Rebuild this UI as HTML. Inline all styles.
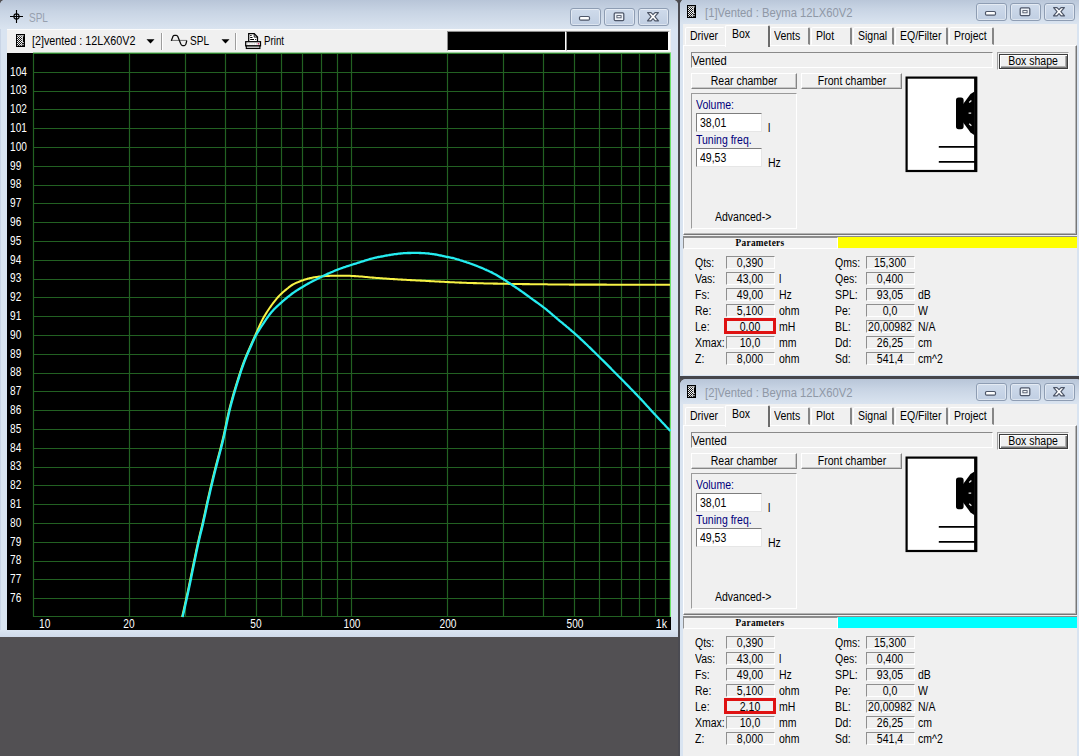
<!DOCTYPE html>
<html><head><meta charset="utf-8"><title>WinISD</title>
<style>
html,body{margin:0;padding:0}
body{width:1079px;height:756px;overflow:hidden;position:relative;background:#525053;font-family:"Liberation Sans",sans-serif;font-size:12px;color:#000}
body div,body span.t,body svg{position:absolute;box-sizing:border-box}
span.t{white-space:pre;display:block}
.frame{background:#d9e4f1}
.title{background:linear-gradient(#b8c5d8 0%,#c8d4e4 40%,#dae4f0 100%)}
.cb{border:1px solid #8e9db3;border-radius:3px;background:linear-gradient(#cfdbeb,#c0cee2);box-shadow:inset 0 0 0 1px rgba(255,255,255,.45)}
.face{background:#f0f0f0}
.sunk{border:1px solid;border-color:#8a8a8a #fff #fff #8a8a8a;background:#f0f0f0}
.sunkw{border:1px solid;border-color:#7d7d7d #e6e6e6 #e6e6e6 #7d7d7d;background:#fff}
.btn{border:1px solid;border-color:#fff #858585 #858585 #fff;background:#f0f0f0;box-shadow:inset -1px -1px 0 #c8c8c8}
.tab{border:1px solid;border-color:#fff #868686 transparent #fff;border-right-width:2px;border-radius:2px 2px 0 0;background:#f0f0f0}
</style></head>
<body>
<div class="frame" style="left:0px;top:0px;width:678px;height:637px;border-left:1px solid #c9d5e6;border-radius:5px 5px 0 0;"></div>
<div class="title" style="left:0px;top:0px;width:678px;height:29px;border-radius:5px 5px 0 0;"></div>
<div style="left:0px;top:630px;width:678px;height:7px;background:linear-gradient(#dbe5f2,#cfdaea)"></div>
<svg style="left:9px;top:9px" width="15" height="15" viewBox="0 0 15 15"><path d="M7.5,1V14M1,7.5H14" stroke="#000" stroke-width="1.1"/><circle cx="7.5" cy="7.5" r="2.6" fill="none" stroke="#000" stroke-width="1.1"/></svg>
<span class="t" style="left:29.3px;top:10.72px;font-size:12.5px;line-height:14.5px;color:#97a0ae;transform:scaleX(0.8);transform-origin:0 50%;">SPL</span>
<div class="cb" style="left:569.5px;top:8px;width:31px;height:17.5px;"></div>
<svg style="left:578.0px;top:11.75px" width="14" height="10" viewBox="0 0 14 10"><rect x="1.5" y="4.5" width="10" height="3.6" rx="1.2" fill="#fff" stroke="#4d5668" stroke-width="1.2"/></svg>
<div class="cb" style="left:603.5px;top:8px;width:31px;height:17.5px;"></div>
<svg style="left:612.0px;top:10.75px" width="14" height="12" viewBox="0 0 14 12"><rect x="2.2" y="1.8" width="9.6" height="7.8" rx="1.2" fill="#eef2f8" stroke="#4d5668" stroke-width="1.25"/><rect x="4.9" y="4.6" width="4.2" height="2.2" fill="#fff" stroke="#4d5668" stroke-width="0.9"/></svg>
<div class="cb" style="left:637.5px;top:8px;width:31px;height:17.5px;"></div>
<svg style="left:646.0px;top:10.75px" width="14" height="12" viewBox="0 0 14 12"><path d="M1.6,1.6 L5,1.6 L7,3.7 L9,1.6 L12.4,1.6 L8.9,5.6 L12.5,9.8 L9,9.8 L7,7.6 L5,9.8 L1.5,9.8 L5.1,5.6 Z" fill="#fff" stroke="#4d5668" stroke-width="1.2" stroke-linejoin="round"/></svg>
<div style="left:7px;top:29px;width:664px;height:24px;background:#f0f0f0;border-top:1px solid #fbfbfb"></div>
<svg style="left:16px;top:34px" width="9" height="13" viewBox="0 0 9 13"><defs><pattern id="hk0" width="2" height="2" patternUnits="userSpaceOnUse"><rect width="2" height="2" fill="#111"/><rect width="1" height="1" fill="#f4f4f4"/><rect x="1" y="1" width="1" height="1" fill="#f4f4f4"/></pattern></defs><rect width="9" height="13" fill="#000"/><rect x="1" y="1.4" width="5" height="10.4" fill="url(#hk0)"/><path d="M1,1.8H8" stroke="#e9e9e9" stroke-width="0.8"/><path d="M6.4,1.5V8.6" stroke="#fff" stroke-width="0.9"/><path d="M6,8.6H8M4.2,10.7H8" stroke="#ededed" stroke-width="0.8"/></svg>
<span class="t" style="left:31.6px;top:34.14px;font-size:12px;line-height:14px;transform:scaleX(0.896);transform-origin:0 50%;">[2]vented : 12LX60V2</span>
<svg style="left:146px;top:39px" width="9" height="5" viewBox="0 0 9 5"><path d="M0.5,0.3H8.5L4.5,4.6Z" fill="#000"/></svg>
<div style="left:161px;top:32.5px;width:1px;height:17.5px;background:#9d9d9d"></div>
<div style="left:162px;top:32.5px;width:1px;height:17.5px;background:#fff"></div>
<svg style="left:170px;top:33px" width="19" height="14" viewBox="170 33 19 14"><path d="M171.5,40.4H186.6" stroke="#6f6f6f" stroke-width="1"/><path d="M171.3,40.9 L173,36.3 Q173.5,35.3 174.5,35.3 H176.3 Q177.3,35.3 177.8,36.5 L180.6,43.6 Q181.3,45.5 182.5,45.5 H184.3 Q185.4,45.5 185.9,44.1 L186.8,40.5" fill="none" stroke="#0a0a0a" stroke-width="1.25" stroke-linejoin="round"/></svg>
<span class="t" style="left:189.5px;top:34.14px;font-size:12px;line-height:14px;transform:scaleX(0.84);transform-origin:0 50%;">SPL</span>
<svg style="left:220.5px;top:39px" width="9" height="5" viewBox="0 0 9 5"><path d="M0.5,0.3H8.5L4.5,4.6Z" fill="#000"/></svg>
<div style="left:235px;top:32.5px;width:1px;height:17.5px;background:#9d9d9d"></div>
<div style="left:236px;top:32.5px;width:1px;height:17.5px;background:#fff"></div>
<svg style="left:245px;top:32px" width="17" height="18" viewBox="245 32 17 18"><path d="M248.7,41.6V33.5H254.2L257.5,37.1V41.6" fill="#fff" stroke="#000" stroke-width="1.25"/><path d="M254.2,33.5V37.1H257.5" fill="none" stroke="#000" stroke-width="0.9"/><path d="M250.2,35.5h1.4M250.2,37.5h2.3M250.2,39.5h3.8M255.2,39.5h1" stroke="#000" stroke-width="1"/><rect x="245.7" y="41.7" width="14.8" height="4.2" fill="#fff" stroke="#000" stroke-width="1.25"/><path d="M247,43.8H257.5" stroke="#c9c9c9" stroke-width="1.2" stroke-dasharray="0.9 0.9"/><rect x="257.7" y="43" width="1.5" height="1.5" fill="#c8326e"/><rect x="246.3" y="45.9" width="13.6" height="2.6" fill="#c4c4c4" stroke="#000" stroke-width="1.1"/></svg>
<span class="t" style="left:264px;top:34.14px;font-size:12px;line-height:14px;transform:scaleX(0.81);transform-origin:0 50%;">Print</span>
<div style="left:446.5px;top:31px;width:119.5px;height:19.5px;background:#000;border:1px solid;border-color:#8e8e8e #fff #fff #8e8e8e"></div>
<div style="left:566px;top:31px;width:104.3px;height:19.5px;background:#000;border:1px solid;border-color:#8e8e8e #fff #fff #8e8e8e;border-right-width:2.3px"></div>
<svg class="plot" style="left:7px;top:53px" width="664" height="577" viewBox="7 53 664 577">
<rect x="7" y="53" width="664" height="577" fill="#000"/>
<path d="M33.5,53V617M129.5,53V617M185.5,53V617M225.5,53V617M256.5,53V617M281.5,53V617M302.5,53V617M321.5,53V617M337.5,53V617M351.5,53V617M447.5,53V617M503.5,53V617M543.5,53V617M574.5,53V617M599.5,53V617M621.5,53V617M639.5,53V617M655.5,53V617M670.5,53V617M33,616.5H671M33,598.5H671M33,579.5H671M33,561.5H671M33,542.5H671M33,523.5H671M33,504.5H671M33,485.5H671M33,467.5H671M33,448.5H671M33,429.5H671M33,410.5H671M33,391.5H671M33,373.5H671M33,354.5H671M33,335.5H671M33,316.5H671M33,297.5H671M33,279.5H671M33,260.5H671M33,241.5H671M33,222.5H671M33,203.5H671M33,185.5H671M33,166.5H671M33,147.5H671M33,128.5H671M33,109.5H671M33,91.5H671M33,72.5H671M33,53.5H671" stroke="#226122" stroke-width="1.2" fill="none"/>
<path d="M33,53.4H671" stroke="#2c7c2c" stroke-width="1.2" fill="none"/>
<path d="M670.6,53V617" stroke="#6be26b" stroke-width="1.6" fill="none"/>
<path d="M182.1,617.0 L183.1,612.7 L184.1,608.3 L185.1,603.8 L186.1,599.3 L187.1,594.7 L188.1,590.1 L189.1,585.3 L190.1,580.4 L191.1,575.5 L192.1,570.6 L193.1,565.7 L194.1,560.9 L195.1,556.1 L196.1,551.3 L197.1,546.6 L198.1,542.1 L199.1,537.8 L200.1,533.6 L201.1,529.6 L202.1,525.4 L203.1,521.1 L204.1,516.5 L205.1,511.9 L206.1,507.2 L207.1,502.6 L208.1,498.2 L209.1,493.9 L210.1,489.6 L211.1,485.4 L212.1,481.2 L213.1,477.1 L214.1,473.0 L215.1,469.0 L216.1,465.1 L217.1,461.3 L218.1,457.5 L219.1,453.7 L220.1,449.9 L221.1,446.1 L222.1,442.1 L223.1,437.9 L224.1,433.4 L225.1,428.7 L226.1,423.9 L227.1,419.2 L228.1,414.6 L229.1,410.3 L230.1,406.3 L231.1,402.5 L232.1,398.9 L233.1,395.3 L234.1,391.9 L235.1,388.5 L236.1,385.2 L237.1,382.0 L238.1,378.8 L239.1,375.6 L240.1,372.5 L241.1,369.5 L242.1,366.6 L243.1,363.8 L244.1,361.1 L245.1,358.6 L246.1,356.1 L247.1,353.8 L248.1,351.5 L249.1,349.2 L250.1,346.9 L251.1,344.6 L252.1,342.4 L253.1,340.1 L254.1,337.9 L255.1,335.6 L256.1,333.4 L257.1,331.1 L258.1,328.8 L259.1,326.6 L260.1,324.5 L261.1,322.4 L262.1,320.4 L263.1,318.4 L264.1,316.6 L265.1,315.0 L266.1,313.4 L267.1,311.8 L268.1,310.3 L269.1,308.8 L270.1,307.3 L271.1,305.9 L272.1,304.5 L273.1,303.1 L274.1,301.8 L275.1,300.6 L276.1,299.4 L277.1,298.2 L278.1,297.0 L279.1,295.9 L280.1,294.9 L281.1,293.9 L282.1,293.0 L283.1,292.1 L284.1,291.2 L285.1,290.4 L286.1,289.6 L287.1,288.8 L288.1,288.0 L289.1,287.1 L290.1,286.4 L291.1,285.6 L292.1,285.0 L293.1,284.4 L294.1,283.9 L295.1,283.4 L296.1,282.9 L297.1,282.5 L298.1,282.1 L299.1,281.7 L300.1,281.3 L301.1,280.9 L302.1,280.5 L303.1,280.2 L304.1,279.8 L305.1,279.5 L306.1,279.2 L307.1,278.9 L308.1,278.6 L309.1,278.4 L310.1,278.1 L311.1,277.9 L312.1,277.7 L313.1,277.5 L314.1,277.3 L315.1,277.2 L316.1,277.0 L317.1,276.9 L318.1,276.7 L319.1,276.6 L320.1,276.5 L321.1,276.4 L322.1,276.3 L323.1,276.2 L324.1,276.2 L325.1,276.1 L326.1,276.0 L327.1,276.0 L328.1,275.9 L329.1,275.9 L330.1,275.8 L331.1,275.8 L332.1,275.8 L333.1,275.8 L334.1,275.8 L335.1,275.8 L336.1,275.7 L337.1,275.7 L338.1,275.7 L339.1,275.7 L340.1,275.7 L341.1,275.7 L342.1,275.7 L343.1,275.7 L344.1,275.7 L345.1,275.7 L346.1,275.7 L347.1,275.7 L348.1,275.8 L349.1,275.8 L350.1,275.8 L351.1,275.9 L352.1,276.0 L353.1,276.0 L354.1,276.1 L355.1,276.1 L356.1,276.2 L357.1,276.3 L358.1,276.3 L359.1,276.4 L360.1,276.5 L361.1,276.5 L362.1,276.6 L363.1,276.7 L364.1,276.8 L365.1,276.9 L366.1,277.0 L367.1,277.1 L368.1,277.2 L369.1,277.3 L370.1,277.4 L371.1,277.5 L372.1,277.6 L373.1,277.6 L374.1,277.7 L375.1,277.8 L376.1,277.9 L377.1,277.9 L378.1,278.0 L379.1,278.1 L380.1,278.2 L381.1,278.2 L382.1,278.3 L383.1,278.4 L384.1,278.5 L385.1,278.5 L386.1,278.6 L387.1,278.7 L388.1,278.7 L389.1,278.8 L390.1,278.9 L391.1,278.9 L392.1,279.0 L393.1,279.1 L394.1,279.1 L395.1,279.2 L396.1,279.3 L397.1,279.3 L398.1,279.4 L399.1,279.4 L400.1,279.5 L401.1,279.6 L402.1,279.6 L403.1,279.7 L404.1,279.7 L405.1,279.8 L406.1,279.8 L407.1,279.9 L408.1,280.0 L409.1,280.0 L410.1,280.1 L411.1,280.1 L412.1,280.2 L413.1,280.2 L414.1,280.3 L415.1,280.3 L416.1,280.4 L417.1,280.4 L418.1,280.5 L419.1,280.5 L420.1,280.6 L421.1,280.6 L422.1,280.7 L423.1,280.7 L424.1,280.8 L425.1,280.8 L426.1,280.9 L427.1,281.0 L428.1,281.0 L429.1,281.1 L430.1,281.1 L431.1,281.2 L432.1,281.2 L433.1,281.3 L434.1,281.3 L435.1,281.4 L436.1,281.4 L437.1,281.5 L438.1,281.5 L439.1,281.6 L440.1,281.6 L441.1,281.7 L442.1,281.7 L443.1,281.8 L444.1,281.8 L445.1,281.9 L446.1,282.0 L447.1,282.0 L448.1,282.1 L449.1,282.1 L450.1,282.2 L451.1,282.2 L452.1,282.3 L453.1,282.3 L454.1,282.3 L455.1,282.4 L456.1,282.4 L457.1,282.5 L458.1,282.5 L459.1,282.6 L460.1,282.6 L461.1,282.6 L462.1,282.7 L463.1,282.7 L464.1,282.7 L465.1,282.8 L466.1,282.8 L467.1,282.9 L468.1,282.9 L469.1,282.9 L470.1,283.0 L471.1,283.0 L472.1,283.0 L473.1,283.1 L474.1,283.1 L475.1,283.1 L476.1,283.1 L477.1,283.2 L478.1,283.2 L479.1,283.2 L480.1,283.3 L481.1,283.3 L482.1,283.3 L483.1,283.3 L484.1,283.4 L485.1,283.4 L486.1,283.4 L487.1,283.4 L488.1,283.5 L489.1,283.5 L490.1,283.5 L491.1,283.5 L492.1,283.5 L493.1,283.6 L494.1,283.6 L495.1,283.6 L496.1,283.6 L497.1,283.6 L498.1,283.7 L499.1,283.7 L500.1,283.7 L501.1,283.7 L502.1,283.7 L503.1,283.8 L504.1,283.8 L505.1,283.8 L506.1,283.8 L507.1,283.8 L508.1,283.8 L509.1,283.9 L510.1,283.9 L511.1,283.9 L512.1,283.9 L513.1,283.9 L514.1,283.9 L515.1,284.0 L516.1,284.0 L517.1,284.0 L518.1,284.0 L519.1,284.0 L520.1,284.0 L521.1,284.0 L522.1,284.1 L523.1,284.1 L524.1,284.1 L525.1,284.1 L526.1,284.1 L527.1,284.1 L528.1,284.1 L529.1,284.1 L530.1,284.2 L531.1,284.2 L532.1,284.2 L533.1,284.2 L534.1,284.2 L535.1,284.2 L536.1,284.2 L537.1,284.2 L538.1,284.3 L539.1,284.3 L540.1,284.3 L541.1,284.3 L542.1,284.3 L543.1,284.3 L544.1,284.3 L545.1,284.3 L546.1,284.3 L547.1,284.3 L548.1,284.4 L549.1,284.4 L550.1,284.4 L551.1,284.4 L552.1,284.4 L553.1,284.4 L554.1,284.4 L555.1,284.4 L556.1,284.4 L557.1,284.4 L558.1,284.5 L559.1,284.5 L560.1,284.5 L561.1,284.5 L562.1,284.5 L563.1,284.5 L564.1,284.5 L565.1,284.5 L566.1,284.5 L567.1,284.5 L568.1,284.5 L569.1,284.6 L570.1,284.6 L571.1,284.6 L572.1,284.6 L573.1,284.6 L574.1,284.6 L575.1,284.6 L576.1,284.6 L577.1,284.6 L578.1,284.6 L579.1,284.6 L580.1,284.6 L581.1,284.6 L582.1,284.6 L583.1,284.6 L584.1,284.6 L585.1,284.6 L586.1,284.6 L587.1,284.6 L588.1,284.6 L589.1,284.6 L590.1,284.6 L591.1,284.6 L592.1,284.6 L593.1,284.6 L594.1,284.6 L595.1,284.6 L596.1,284.6 L597.1,284.6 L598.1,284.6 L599.1,284.6 L600.1,284.6 L601.1,284.6 L602.1,284.6 L603.1,284.6 L604.1,284.6 L605.1,284.6 L606.1,284.6 L607.1,284.7 L608.1,284.7 L609.1,284.7 L610.1,284.7 L611.1,284.7 L612.1,284.7 L613.1,284.7 L614.1,284.7 L615.1,284.7 L616.1,284.7 L617.1,284.7 L618.1,284.7 L619.1,284.7 L620.1,284.7 L621.1,284.7 L622.1,284.7 L623.1,284.7 L624.1,284.7 L625.1,284.7 L626.1,284.7 L627.1,284.7 L628.1,284.7 L629.1,284.7 L630.1,284.7 L631.1,284.7 L632.1,284.7 L633.1,284.7 L634.1,284.7 L635.1,284.7 L636.1,284.7 L637.1,284.7 L638.1,284.7 L639.1,284.7 L640.1,284.7 L641.1,284.7 L642.1,284.7 L643.1,284.7 L644.1,284.7 L645.1,284.7 L646.1,284.7 L647.1,284.7 L648.1,284.7 L649.1,284.7 L650.1,284.7 L651.1,284.7 L652.1,284.7 L653.1,284.7 L654.1,284.7 L655.1,284.7 L656.1,284.7 L657.1,284.7 L658.1,284.7 L659.1,284.7 L660.1,284.7 L661.1,284.7 L662.1,284.7 L663.1,284.7 L664.1,284.7 L665.1,284.7 L666.1,284.7 L667.1,284.7 L668.1,284.7 L669.1,284.7 L670.0,284.7" stroke="#f7f245" stroke-width="2.05" fill="none" stroke-linejoin="round"/>
<path d="M182.6,617.0 L183.6,612.7 L184.6,608.3 L185.6,603.8 L186.6,599.3 L187.6,594.7 L188.6,590.1 L189.6,585.3 L190.6,580.4 L191.6,575.5 L192.6,570.6 L193.6,565.7 L194.6,560.9 L195.6,556.1 L196.6,551.3 L197.6,546.6 L198.6,542.1 L199.6,537.8 L200.6,533.6 L201.6,529.6 L202.6,525.4 L203.6,521.1 L204.6,516.5 L205.6,511.9 L206.6,507.2 L207.6,502.6 L208.6,498.2 L209.6,493.9 L210.6,489.6 L211.6,485.4 L212.6,481.2 L213.6,477.1 L214.6,473.0 L215.6,469.0 L216.6,465.1 L217.6,461.3 L218.6,457.5 L219.6,453.7 L220.6,449.9 L221.6,446.1 L222.6,442.1 L223.6,437.9 L224.6,433.4 L225.6,428.7 L226.6,423.9 L227.6,419.2 L228.6,414.6 L229.6,410.3 L230.6,406.3 L231.6,402.5 L232.6,398.9 L233.6,395.3 L234.6,391.9 L235.6,388.5 L236.6,385.2 L237.6,382.0 L238.6,378.8 L239.6,375.6 L240.6,372.5 L241.6,369.5 L242.6,366.6 L243.6,363.8 L244.6,361.1 L245.6,358.5 L246.6,356.1 L247.6,353.8 L248.6,351.5 L249.6,349.2 L250.6,347.0 L251.6,344.7 L252.6,342.4 L253.6,340.2 L254.6,338.1 L255.6,336.1 L256.6,334.2 L257.6,332.4 L258.6,330.8 L259.6,329.1 L260.6,327.6 L261.6,326.0 L262.6,324.6 L263.6,323.1 L264.6,321.6 L265.6,320.2 L266.6,318.7 L267.6,317.3 L268.6,315.9 L269.6,314.5 L270.6,313.2 L271.6,312.0 L272.6,310.9 L273.6,309.8 L274.6,308.7 L275.6,307.8 L276.6,306.8 L277.6,305.9 L278.6,305.0 L279.6,304.1 L280.6,303.2 L281.6,302.3 L282.6,301.4 L283.6,300.5 L284.6,299.7 L285.6,298.8 L286.6,298.0 L287.6,297.2 L288.6,296.4 L289.6,295.6 L290.6,294.8 L291.6,294.0 L292.6,293.3 L293.6,292.6 L294.6,291.9 L295.6,291.2 L296.6,290.6 L297.6,289.9 L298.6,289.3 L299.6,288.7 L300.6,288.1 L301.6,287.5 L302.6,286.9 L303.6,286.3 L304.6,285.7 L305.6,285.1 L306.6,284.5 L307.6,283.9 L308.6,283.4 L309.6,282.8 L310.6,282.3 L311.6,281.7 L312.6,281.2 L313.6,280.7 L314.6,280.2 L315.6,279.7 L316.6,279.2 L317.6,278.7 L318.6,278.2 L319.6,277.7 L320.6,277.2 L321.6,276.7 L322.6,276.3 L323.6,275.8 L324.6,275.3 L325.6,274.8 L326.6,274.4 L327.6,273.9 L328.6,273.4 L329.6,273.0 L330.6,272.5 L331.6,272.1 L332.6,271.7 L333.6,271.2 L334.6,270.8 L335.6,270.4 L336.6,270.0 L337.6,269.6 L338.6,269.2 L339.6,268.8 L340.6,268.5 L341.6,268.1 L342.6,267.8 L343.6,267.4 L344.6,267.1 L345.6,266.8 L346.6,266.4 L347.6,266.1 L348.6,265.8 L349.6,265.5 L350.6,265.2 L351.6,264.8 L352.6,264.5 L353.6,264.2 L354.6,263.9 L355.6,263.6 L356.6,263.3 L357.6,262.9 L358.6,262.6 L359.6,262.3 L360.6,262.0 L361.6,261.7 L362.6,261.4 L363.6,261.1 L364.6,260.7 L365.6,260.4 L366.6,260.1 L367.6,259.8 L368.6,259.5 L369.6,259.2 L370.6,258.9 L371.6,258.6 L372.6,258.4 L373.6,258.1 L374.6,257.9 L375.6,257.7 L376.6,257.5 L377.6,257.2 L378.6,257.0 L379.6,256.9 L380.6,256.7 L381.6,256.5 L382.6,256.3 L383.6,256.1 L384.6,255.9 L385.6,255.7 L386.6,255.5 L387.6,255.3 L388.6,255.2 L389.6,255.0 L390.6,254.8 L391.6,254.6 L392.6,254.5 L393.6,254.3 L394.6,254.2 L395.6,254.1 L396.6,254.0 L397.6,253.8 L398.6,253.7 L399.6,253.6 L400.6,253.5 L401.6,253.4 L402.6,253.3 L403.6,253.2 L404.6,253.2 L405.6,253.1 L406.6,253.1 L407.6,253.0 L408.6,253.0 L409.6,253.0 L410.6,253.0 L411.6,252.9 L412.6,252.9 L413.6,252.9 L414.6,252.9 L415.6,252.9 L416.6,252.9 L417.6,252.9 L418.6,252.9 L419.6,253.0 L420.6,253.0 L421.6,253.1 L422.6,253.1 L423.6,253.1 L424.6,253.2 L425.6,253.3 L426.6,253.3 L427.6,253.4 L428.6,253.5 L429.6,253.7 L430.6,253.8 L431.6,253.9 L432.6,254.1 L433.6,254.2 L434.6,254.4 L435.6,254.5 L436.6,254.7 L437.6,254.9 L438.6,255.1 L439.6,255.3 L440.6,255.5 L441.6,255.7 L442.6,256.0 L443.6,256.2 L444.6,256.4 L445.6,256.6 L446.6,256.8 L447.6,257.0 L448.6,257.2 L449.6,257.4 L450.6,257.6 L451.6,257.8 L452.6,258.0 L453.6,258.2 L454.6,258.5 L455.6,258.8 L456.6,259.1 L457.6,259.3 L458.6,259.6 L459.6,260.0 L460.6,260.3 L461.6,260.6 L462.6,260.9 L463.6,261.3 L464.6,261.6 L465.6,261.9 L466.6,262.3 L467.6,262.6 L468.6,262.9 L469.6,263.3 L470.6,263.7 L471.6,264.0 L472.6,264.4 L473.6,264.7 L474.6,265.1 L475.6,265.5 L476.6,265.9 L477.6,266.3 L478.6,266.7 L479.6,267.1 L480.6,267.5 L481.6,267.9 L482.6,268.3 L483.6,268.7 L484.6,269.2 L485.6,269.6 L486.6,270.1 L487.6,270.5 L488.6,271.0 L489.6,271.5 L490.6,271.9 L491.6,272.4 L492.6,272.9 L493.6,273.5 L494.6,274.0 L495.6,274.5 L496.6,275.1 L497.6,275.7 L498.6,276.3 L499.6,276.9 L500.6,277.5 L501.6,278.1 L502.6,278.7 L503.6,279.3 L504.6,280.0 L505.6,280.6 L506.6,281.3 L507.6,281.9 L508.6,282.6 L509.6,283.3 L510.6,284.0 L511.6,284.6 L512.6,285.3 L513.6,286.0 L514.6,286.6 L515.6,287.3 L516.6,288.0 L517.6,288.6 L518.6,289.3 L519.6,290.0 L520.6,290.7 L521.6,291.4 L522.6,292.1 L523.6,292.8 L524.6,293.5 L525.6,294.3 L526.6,295.0 L527.6,295.7 L528.6,296.4 L529.6,297.2 L530.6,297.9 L531.6,298.6 L532.6,299.4 L533.6,300.1 L534.6,300.8 L535.6,301.5 L536.6,302.2 L537.6,302.9 L538.6,303.6 L539.6,304.4 L540.6,305.1 L541.6,305.8 L542.6,306.6 L543.6,307.4 L544.6,308.1 L545.6,308.9 L546.6,309.7 L547.6,310.6 L548.6,311.4 L549.6,312.2 L550.6,313.1 L551.6,313.9 L552.6,314.8 L553.6,315.6 L554.6,316.5 L555.6,317.4 L556.6,318.2 L557.6,319.1 L558.6,319.9 L559.6,320.8 L560.6,321.6 L561.6,322.4 L562.6,323.2 L563.6,324.1 L564.6,324.9 L565.6,325.7 L566.6,326.6 L567.6,327.4 L568.6,328.2 L569.6,329.1 L570.6,329.9 L571.6,330.8 L572.6,331.6 L573.6,332.5 L574.6,333.4 L575.6,334.3 L576.6,335.2 L577.6,336.1 L578.6,337.0 L579.6,337.9 L580.6,338.9 L581.6,339.8 L582.6,340.7 L583.6,341.7 L584.6,342.6 L585.6,343.6 L586.6,344.5 L587.6,345.5 L588.6,346.5 L589.6,347.4 L590.6,348.4 L591.6,349.4 L592.6,350.4 L593.6,351.3 L594.6,352.3 L595.6,353.3 L596.6,354.3 L597.6,355.2 L598.6,356.2 L599.6,357.2 L600.6,358.2 L601.6,359.2 L602.6,360.2 L603.6,361.1 L604.6,362.1 L605.6,363.1 L606.6,364.1 L607.6,365.1 L608.6,366.1 L609.6,367.1 L610.6,368.1 L611.6,369.2 L612.6,370.2 L613.6,371.2 L614.6,372.2 L615.6,373.2 L616.6,374.2 L617.6,375.2 L618.6,376.3 L619.6,377.3 L620.6,378.3 L621.6,379.3 L622.6,380.3 L623.6,381.3 L624.6,382.3 L625.6,383.4 L626.6,384.4 L627.6,385.4 L628.6,386.4 L629.6,387.4 L630.6,388.5 L631.6,389.5 L632.6,390.5 L633.6,391.5 L634.6,392.6 L635.6,393.6 L636.6,394.6 L637.6,395.7 L638.6,396.7 L639.6,397.8 L640.6,398.9 L641.6,399.9 L642.6,401.0 L643.6,402.1 L644.6,403.2 L645.6,404.3 L646.6,405.4 L647.6,406.5 L648.6,407.6 L649.6,408.7 L650.6,409.8 L651.6,410.9 L652.6,412.0 L653.6,413.1 L654.6,414.1 L655.6,415.2 L656.6,416.3 L657.6,417.4 L658.6,418.4 L659.6,419.5 L660.6,420.6 L661.6,421.7 L662.6,422.7 L663.6,423.8 L664.6,424.8 L665.6,425.9 L666.6,427.0 L667.6,428.0 L668.6,429.1 L669.6,430.1 L670.5,431.1" stroke="#25ecf0" stroke-width="2.3" fill="none" stroke-linejoin="round"/>
</svg>
<div style="left:33px;top:52px;width:638px;height:1px;background:#9fd09f"></div>
<span class="t" style="left:9.5px;top:590.92px;font-size:12.5px;line-height:14.5px;color:#fff;transform:scaleX(0.81);transform-origin:0 50%;">76</span>
<span class="t" style="left:9.5px;top:572.12px;font-size:12.5px;line-height:14.5px;color:#fff;transform:scaleX(0.81);transform-origin:0 50%;">77</span>
<span class="t" style="left:9.5px;top:553.32px;font-size:12.5px;line-height:14.5px;color:#fff;transform:scaleX(0.81);transform-origin:0 50%;">78</span>
<span class="t" style="left:9.5px;top:534.52px;font-size:12.5px;line-height:14.5px;color:#fff;transform:scaleX(0.81);transform-origin:0 50%;">79</span>
<span class="t" style="left:9.5px;top:515.72px;font-size:12.5px;line-height:14.5px;color:#fff;transform:scaleX(0.81);transform-origin:0 50%;">80</span>
<span class="t" style="left:9.5px;top:496.92px;font-size:12.5px;line-height:14.5px;color:#fff;transform:scaleX(0.81);transform-origin:0 50%;">81</span>
<span class="t" style="left:9.5px;top:478.12px;font-size:12.5px;line-height:14.5px;color:#fff;transform:scaleX(0.81);transform-origin:0 50%;">82</span>
<span class="t" style="left:9.5px;top:459.32px;font-size:12.5px;line-height:14.5px;color:#fff;transform:scaleX(0.81);transform-origin:0 50%;">83</span>
<span class="t" style="left:9.5px;top:440.52px;font-size:12.5px;line-height:14.5px;color:#fff;transform:scaleX(0.81);transform-origin:0 50%;">84</span>
<span class="t" style="left:9.5px;top:421.72px;font-size:12.5px;line-height:14.5px;color:#fff;transform:scaleX(0.81);transform-origin:0 50%;">85</span>
<span class="t" style="left:9.5px;top:402.92px;font-size:12.5px;line-height:14.5px;color:#fff;transform:scaleX(0.81);transform-origin:0 50%;">86</span>
<span class="t" style="left:9.5px;top:384.12px;font-size:12.5px;line-height:14.5px;color:#fff;transform:scaleX(0.81);transform-origin:0 50%;">87</span>
<span class="t" style="left:9.5px;top:365.32px;font-size:12.5px;line-height:14.5px;color:#fff;transform:scaleX(0.81);transform-origin:0 50%;">88</span>
<span class="t" style="left:9.5px;top:346.52px;font-size:12.5px;line-height:14.5px;color:#fff;transform:scaleX(0.81);transform-origin:0 50%;">89</span>
<span class="t" style="left:9.5px;top:327.72px;font-size:12.5px;line-height:14.5px;color:#fff;transform:scaleX(0.81);transform-origin:0 50%;">90</span>
<span class="t" style="left:9.5px;top:308.92px;font-size:12.5px;line-height:14.5px;color:#fff;transform:scaleX(0.81);transform-origin:0 50%;">91</span>
<span class="t" style="left:9.5px;top:290.12px;font-size:12.5px;line-height:14.5px;color:#fff;transform:scaleX(0.81);transform-origin:0 50%;">92</span>
<span class="t" style="left:9.5px;top:271.32px;font-size:12.5px;line-height:14.5px;color:#fff;transform:scaleX(0.81);transform-origin:0 50%;">93</span>
<span class="t" style="left:9.5px;top:252.52px;font-size:12.5px;line-height:14.5px;color:#fff;transform:scaleX(0.81);transform-origin:0 50%;">94</span>
<span class="t" style="left:9.5px;top:233.72px;font-size:12.5px;line-height:14.5px;color:#fff;transform:scaleX(0.81);transform-origin:0 50%;">95</span>
<span class="t" style="left:9.5px;top:214.92px;font-size:12.5px;line-height:14.5px;color:#fff;transform:scaleX(0.81);transform-origin:0 50%;">96</span>
<span class="t" style="left:9.5px;top:196.12px;font-size:12.5px;line-height:14.5px;color:#fff;transform:scaleX(0.81);transform-origin:0 50%;">97</span>
<span class="t" style="left:9.5px;top:177.32px;font-size:12.5px;line-height:14.5px;color:#fff;transform:scaleX(0.81);transform-origin:0 50%;">98</span>
<span class="t" style="left:9.5px;top:158.52px;font-size:12.5px;line-height:14.5px;color:#fff;transform:scaleX(0.81);transform-origin:0 50%;">99</span>
<span class="t" style="left:9.5px;top:139.72px;font-size:12.5px;line-height:14.5px;color:#fff;transform:scaleX(0.81);transform-origin:0 50%;">100</span>
<span class="t" style="left:9.5px;top:120.92px;font-size:12.5px;line-height:14.5px;color:#fff;transform:scaleX(0.81);transform-origin:0 50%;">101</span>
<span class="t" style="left:9.5px;top:102.12px;font-size:12.5px;line-height:14.5px;color:#fff;transform:scaleX(0.81);transform-origin:0 50%;">102</span>
<span class="t" style="left:9.5px;top:83.32px;font-size:12.5px;line-height:14.5px;color:#fff;transform:scaleX(0.81);transform-origin:0 50%;">103</span>
<span class="t" style="left:9.5px;top:64.52px;font-size:12.5px;line-height:14.5px;color:#fff;transform:scaleX(0.81);transform-origin:0 50%;">104</span>
<span class="t" style="left:129.37805361897802px;top:617.02px;font-size:12.5px;line-height:14.5px;color:#fff;transform:translateX(-50%) scaleX(0.81);transform-origin:50% 50%;">20</span>
<span class="t" style="left:256.121946381022px;top:617.02px;font-size:12.5px;line-height:14.5px;color:#fff;transform:translateX(-50%) scaleX(0.81);transform-origin:50% 50%;">50</span>
<span class="t" style="left:352.0px;top:617.02px;font-size:12.5px;line-height:14.5px;color:#fff;transform:translateX(-50%) scaleX(0.81);transform-origin:50% 50%;">100</span>
<span class="t" style="left:447.878053618978px;top:617.02px;font-size:12.5px;line-height:14.5px;color:#fff;transform:translateX(-50%) scaleX(0.81);transform-origin:50% 50%;">200</span>
<span class="t" style="left:574.621946381022px;top:617.02px;font-size:12.5px;line-height:14.5px;color:#fff;transform:translateX(-50%) scaleX(0.81);transform-origin:50% 50%;">500</span>
<span class="t" style="left:38.7px;top:617.02px;font-size:12.5px;line-height:14.5px;color:#fff;transform:scaleX(0.81);transform-origin:0 50%;">10</span>
<span class="t" style="left:667px;top:617.02px;font-size:12.5px;line-height:14.5px;color:#fff;transform:translateX(-100%) scaleX(0.85);transform-origin:100% 50%;">1k</span>
<div style="left:678px;top:0px;width:2px;height:756px;background:#4b4b52"></div>
<div class="frame" style="left:680px;top:-1px;width:402px;height:377.5px;border-radius:6px 6px 0 0;"></div>
<div class="title" style="left:680px;top:-1px;width:402px;height:25px;border-radius:6px 6px 0 0;"></div>
<div class="face" style="left:683px;top:24px;width:393.5px;height:350.7px;"></div>
<svg style="left:687px;top:4.9px" width="9" height="13" viewBox="0 0 9 13"><defs><pattern id="hk1" width="2" height="2" patternUnits="userSpaceOnUse"><rect width="2" height="2" fill="#111"/><rect width="1" height="1" fill="#f4f4f4"/><rect x="1" y="1" width="1" height="1" fill="#f4f4f4"/></pattern></defs><rect width="9" height="13" fill="#000"/><rect x="1" y="1.4" width="5" height="10.4" fill="url(#hk1)"/><path d="M1,1.8H8" stroke="#e9e9e9" stroke-width="0.8"/><path d="M6.4,1.5V8.6" stroke="#fff" stroke-width="0.9"/><path d="M6,8.6H8M4.2,10.7H8" stroke="#ededed" stroke-width="0.8"/></svg>
<span class="t" style="left:704.5px;top:5.92px;font-size:12.5px;line-height:14.5px;color:#8f98a6;transform:scaleX(0.9);transform-origin:0 50%;">[1]Vented : Beyma 12LX60V2</span>
<div class="cb" style="left:975.5px;top:3.2px;width:31px;height:17.4px;"></div>
<svg style="left:984.0px;top:6.899999999999999px" width="14" height="10" viewBox="0 0 14 10"><rect x="1.5" y="4.5" width="10" height="3.6" rx="1.2" fill="#fff" stroke="#4d5668" stroke-width="1.2"/></svg>
<div class="cb" style="left:1009.5px;top:3.2px;width:31px;height:17.4px;"></div>
<svg style="left:1018.0px;top:5.899999999999999px" width="14" height="12" viewBox="0 0 14 12"><rect x="2.2" y="1.8" width="9.6" height="7.8" rx="1.2" fill="#eef2f8" stroke="#4d5668" stroke-width="1.25"/><rect x="4.9" y="4.6" width="4.2" height="2.2" fill="#fff" stroke="#4d5668" stroke-width="0.9"/></svg>
<div class="cb" style="left:1043.5px;top:3.2px;width:31px;height:17.4px;"></div>
<svg style="left:1052.0px;top:5.899999999999999px" width="14" height="12" viewBox="0 0 14 12"><path d="M1.6,1.6 L5,1.6 L7,3.7 L9,1.6 L12.4,1.6 L8.9,5.6 L12.5,9.8 L9,9.8 L7,7.6 L5,9.8 L1.5,9.8 L5.1,5.6 Z" fill="#fff" stroke="#4d5668" stroke-width="1.2" stroke-linejoin="round"/></svg>
<div style="left:683px;top:45px;width:394px;height:189.5px;background:#f0f0f0;border:1px solid;border-color:#fff #767676 #767676 #fff;box-shadow:inset -1px -1px 0 #b5b5b5"></div>
<div class="tab" style="left:685px;top:27px;width:40px;height:18px;border-right-color:transparent;box-shadow:none;"></div>
<span class="t" style="left:690px;top:28.64px;font-size:12px;line-height:14px;transform:scaleX(0.875);transform-origin:0 50%;">Driver</span>
<div class="tab" style="left:769.5px;top:27px;width:40.5px;height:18px;"></div>
<span class="t" style="left:774.1px;top:28.64px;font-size:12px;line-height:14px;transform:scaleX(0.875);transform-origin:0 50%;">Vents</span>
<div class="tab" style="left:811px;top:27px;width:41px;height:18px;"></div>
<span class="t" style="left:816.3px;top:28.64px;font-size:12px;line-height:14px;transform:scaleX(0.875);transform-origin:0 50%;">Plot</span>
<div class="tab" style="left:853px;top:27px;width:41px;height:18px;"></div>
<span class="t" style="left:858.3px;top:28.64px;font-size:12px;line-height:14px;transform:scaleX(0.875);transform-origin:0 50%;">Signal</span>
<div class="tab" style="left:895px;top:27px;width:53px;height:18px;"></div>
<span class="t" style="left:900.3px;top:28.64px;font-size:12px;line-height:14px;transform:scaleX(0.875);transform-origin:0 50%;">EQ/Filter</span>
<div class="tab" style="left:949px;top:27px;width:44.5px;height:18px;"></div>
<span class="t" style="left:954.3px;top:28.64px;font-size:12px;line-height:14px;transform:scaleX(0.875);transform-origin:0 50%;">Project</span>
<div style="left:725px;top:24.5px;width:45px;height:22px;background:#f0f0f0;border:1px solid;border-color:#fff #6b6b6b transparent #fff;border-right-width:2px;border-bottom:0;border-radius:2px 2px 0 0"></div>
<span class="t" style="left:732.2px;top:26.74px;font-size:12px;line-height:14px;transform:scaleX(0.875);transform-origin:0 50%;">Box</span>
<div class="sunk" style="left:691px;top:52px;width:302px;height:16px;"></div>
<span class="t" style="left:692.1px;top:53.54px;font-size:12px;line-height:14px;transform:scaleX(0.93);transform-origin:0 50%;">Vented</span>
<div style="left:997px;top:52px;width:72px;height:18px;border:1px solid;border-color:#a0a0a0 #fff #fff #a0a0a0;background:#f0f0f0"></div>
<div style="left:998.5px;top:53.5px;width:69.5px;height:15.5px;border:1px solid #3c3c3c;background:#f0f0f0;box-shadow:inset 1px 1px 0 #fff,inset -1px -1px 0 #7a7a7a,inset -2px -2px 0 #b0b0b0"></div>
<span class="t" style="left:1033.3px;top:53.64px;font-size:12px;line-height:14px;transform:translateX(-50%) scaleX(0.875);transform-origin:50% 50%;">Box shape</span>
<div class="btn" style="left:691px;top:72.5px;width:106px;height:16.5px;"></div>
<span class="t" style="left:744px;top:73.64px;font-size:12px;line-height:14px;transform:translateX(-50%) scaleX(0.875);transform-origin:50% 50%;">Rear chamber</span>
<div class="btn" style="left:801px;top:72.5px;width:101px;height:16.5px;"></div>
<span class="t" style="left:851.5px;top:73.64px;font-size:12px;line-height:14px;transform:translateX(-50%) scaleX(0.875);transform-origin:50% 50%;">Front chamber</span>
<div style="left:691px;top:93px;width:106px;height:136px;border:1px solid;border-color:#9a9a9a #fff #fff #9a9a9a;"></div>
<span class="t" style="left:696px;top:97.84px;font-size:12px;line-height:14px;color:#00007c;transform:scaleX(0.875);transform-origin:0 50%;">Volume:</span>
<div class="sunkw" style="left:696px;top:113px;width:66px;height:18.5px;"></div>
<span class="t" style="left:699.5px;top:115.94px;font-size:12px;line-height:14px;transform:scaleX(0.875);transform-origin:0 50%;">38,01</span>
<span class="t" style="left:768px;top:120.54px;font-size:12px;line-height:14px;transform:scaleX(0.875);transform-origin:0 50%;">l</span>
<span class="t" style="left:696.3px;top:133.04px;font-size:12px;line-height:14px;color:#00007c;transform:scaleX(0.875);transform-origin:0 50%;">Tuning freq.</span>
<div class="sunkw" style="left:696px;top:148px;width:66px;height:18.5px;"></div>
<span class="t" style="left:699.5px;top:151.04px;font-size:12px;line-height:14px;transform:scaleX(0.875);transform-origin:0 50%;">49,53</span>
<span class="t" style="left:767.5px;top:156.04px;font-size:12px;line-height:14px;transform:scaleX(0.875);transform-origin:0 50%;">Hz</span>
<span class="t" style="left:714.8px;top:209.84px;font-size:12px;line-height:14px;transform:scaleX(0.875);transform-origin:0 50%;">Advanced-&gt;</span>
<svg style="left:905px;top:76px" width="74" height="97" viewBox="905 76 74 97"><rect x="906.6" y="77.6" width="69.6" height="93.4" fill="#fff" stroke="#000" stroke-width="2.2"/><path d="M975.6,77V171.5" stroke="#000" stroke-width="3"/><path d="M938.8,146.9H975M938.8,161.9H975" stroke="#000" stroke-width="1.7"/><rect x="956" y="97.6" width="7.6" height="31.6" rx="2.6" fill="#000"/><path d="M962.8,104.4 L970.5,94 L974.5,91.4 V135.2 L970.5,132.5 L962.8,122Z" fill="#000"/><path d="M969.2,102.4l2.2,-2M968.6,113.1h2.6M969.2,123.8l2.2,2" stroke="#e8e8e8" stroke-width="1.3"/></svg>
<div style="left:683px;top:236px;width:394px;height:13px;border-top:1px solid #8a8a8a;background:#f0f0f0"></div>
<div style="left:682.6px;top:237px;width:155.4px;height:11.5px;border:1px solid;border-color:#8f8f8f #fff #fff #8f8f8f;background:#f2f2f2"></div>
<span class="t" style="left:759.5px;top:236.84px;font-size:10px;line-height:12px;transform:translateX(-50%) scaleX(0.93);transform-origin:50% 50%;font-family:'Liberation Serif',serif;font-weight:bold;letter-spacing:0.3px;">Parameters</span>
<div style="left:838px;top:237px;width:238.5px;height:10.6px;background:#ffff00"></div>
<span class="t" style="left:694.6px;top:256.04px;font-size:12px;line-height:14px;transform:scaleX(0.875);transform-origin:0 50%;">Qts:</span>
<div class="sunk" style="left:726px;top:256.4px;width:48.5px;height:12.6px;border-color:#8f8f8f #fff #fff #8f8f8f"></div>
<span class="t" style="left:750.3px;top:256.04px;font-size:12px;line-height:14px;transform:translateX(-50%) scaleX(0.875);transform-origin:50% 50%;">0,390</span>
<span class="t" style="left:694.6px;top:272.04px;font-size:12px;line-height:14px;transform:scaleX(0.875);transform-origin:0 50%;">Vas:</span>
<div class="sunk" style="left:726px;top:272.4px;width:48.5px;height:12.6px;border-color:#8f8f8f #fff #fff #8f8f8f"></div>
<span class="t" style="left:750.3px;top:272.04px;font-size:12px;line-height:14px;transform:translateX(-50%) scaleX(0.875);transform-origin:50% 50%;">43,00</span>
<span class="t" style="left:778.6px;top:272.04px;font-size:12px;line-height:14px;transform:scaleX(0.875);transform-origin:0 50%;">l</span>
<span class="t" style="left:694.6px;top:288.04px;font-size:12px;line-height:14px;transform:scaleX(0.875);transform-origin:0 50%;">Fs:</span>
<div class="sunk" style="left:726px;top:288.4px;width:48.5px;height:12.6px;border-color:#8f8f8f #fff #fff #8f8f8f"></div>
<span class="t" style="left:750.3px;top:288.04px;font-size:12px;line-height:14px;transform:translateX(-50%) scaleX(0.875);transform-origin:50% 50%;">49,00</span>
<span class="t" style="left:778.6px;top:288.04px;font-size:12px;line-height:14px;transform:scaleX(0.875);transform-origin:0 50%;">Hz</span>
<span class="t" style="left:694.6px;top:304.04px;font-size:12px;line-height:14px;transform:scaleX(0.875);transform-origin:0 50%;">Re:</span>
<div class="sunk" style="left:726px;top:304.4px;width:48.5px;height:12.6px;border-color:#8f8f8f #fff #fff #8f8f8f"></div>
<span class="t" style="left:750.3px;top:304.04px;font-size:12px;line-height:14px;transform:translateX(-50%) scaleX(0.875);transform-origin:50% 50%;">5,100</span>
<span class="t" style="left:778.6px;top:304.04px;font-size:12px;line-height:14px;transform:scaleX(0.875);transform-origin:0 50%;">ohm</span>
<span class="t" style="left:694.6px;top:320.04px;font-size:12px;line-height:14px;transform:scaleX(0.875);transform-origin:0 50%;">Le:</span>
<div class="sunk" style="left:726px;top:320.4px;width:48.5px;height:12.6px;border-color:#8f8f8f #fff #fff #8f8f8f"></div>
<span class="t" style="left:750.3px;top:320.04px;font-size:12px;line-height:14px;transform:translateX(-50%) scaleX(0.875);transform-origin:50% 50%;">0,00</span>
<span class="t" style="left:778.6px;top:320.04px;font-size:12px;line-height:14px;transform:scaleX(0.875);transform-origin:0 50%;">mH</span>
<span class="t" style="left:694.6px;top:336.04px;font-size:12px;line-height:14px;transform:scaleX(0.875);transform-origin:0 50%;">Xmax:</span>
<div class="sunk" style="left:726px;top:336.4px;width:48.5px;height:12.6px;border-color:#8f8f8f #fff #fff #8f8f8f"></div>
<span class="t" style="left:750.3px;top:336.04px;font-size:12px;line-height:14px;transform:translateX(-50%) scaleX(0.875);transform-origin:50% 50%;">10,0</span>
<span class="t" style="left:778.6px;top:336.04px;font-size:12px;line-height:14px;transform:scaleX(0.875);transform-origin:0 50%;">mm</span>
<span class="t" style="left:694.6px;top:352.04px;font-size:12px;line-height:14px;transform:scaleX(0.875);transform-origin:0 50%;">Z:</span>
<div class="sunk" style="left:726px;top:352.4px;width:48.5px;height:12.6px;border-color:#8f8f8f #fff #fff #8f8f8f"></div>
<span class="t" style="left:750.3px;top:352.04px;font-size:12px;line-height:14px;transform:translateX(-50%) scaleX(0.875);transform-origin:50% 50%;">8,000</span>
<span class="t" style="left:778.6px;top:352.04px;font-size:12px;line-height:14px;transform:scaleX(0.875);transform-origin:0 50%;">ohm</span>
<span class="t" style="left:834.5px;top:256.04px;font-size:12px;line-height:14px;transform:scaleX(0.875);transform-origin:0 50%;">Qms:</span>
<div class="sunk" style="left:866px;top:256.4px;width:48.5px;height:12.6px;border-color:#8f8f8f #fff #fff #8f8f8f"></div>
<span class="t" style="left:890.3px;top:256.04px;font-size:12px;line-height:14px;transform:translateX(-50%) scaleX(0.875);transform-origin:50% 50%;">15,300</span>
<span class="t" style="left:834.5px;top:272.04px;font-size:12px;line-height:14px;transform:scaleX(0.875);transform-origin:0 50%;">Qes:</span>
<div class="sunk" style="left:866px;top:272.4px;width:48.5px;height:12.6px;border-color:#8f8f8f #fff #fff #8f8f8f"></div>
<span class="t" style="left:890.3px;top:272.04px;font-size:12px;line-height:14px;transform:translateX(-50%) scaleX(0.875);transform-origin:50% 50%;">0,400</span>
<span class="t" style="left:834.5px;top:288.04px;font-size:12px;line-height:14px;transform:scaleX(0.875);transform-origin:0 50%;">SPL:</span>
<div class="sunk" style="left:866px;top:288.4px;width:48.5px;height:12.6px;border-color:#8f8f8f #fff #fff #8f8f8f"></div>
<span class="t" style="left:890.3px;top:288.04px;font-size:12px;line-height:14px;transform:translateX(-50%) scaleX(0.875);transform-origin:50% 50%;">93,05</span>
<span class="t" style="left:918.4px;top:288.04px;font-size:12px;line-height:14px;transform:scaleX(0.875);transform-origin:0 50%;">dB</span>
<span class="t" style="left:834.5px;top:304.04px;font-size:12px;line-height:14px;transform:scaleX(0.875);transform-origin:0 50%;">Pe:</span>
<div class="sunk" style="left:866px;top:304.4px;width:48.5px;height:12.6px;border-color:#8f8f8f #fff #fff #8f8f8f"></div>
<span class="t" style="left:890.3px;top:304.04px;font-size:12px;line-height:14px;transform:translateX(-50%) scaleX(0.875);transform-origin:50% 50%;">0,0</span>
<span class="t" style="left:918.4px;top:304.04px;font-size:12px;line-height:14px;transform:scaleX(0.875);transform-origin:0 50%;">W</span>
<span class="t" style="left:834.5px;top:320.04px;font-size:12px;line-height:14px;transform:scaleX(0.875);transform-origin:0 50%;">BL:</span>
<div class="sunk" style="left:866px;top:320.4px;width:48.5px;height:12.6px;border-color:#8f8f8f #fff #fff #8f8f8f"></div>
<span class="t" style="left:890.3px;top:320.04px;font-size:12px;line-height:14px;transform:translateX(-50%) scaleX(0.875);transform-origin:50% 50%;">20,00982</span>
<span class="t" style="left:918.4px;top:320.04px;font-size:12px;line-height:14px;transform:scaleX(0.875);transform-origin:0 50%;">N/A</span>
<span class="t" style="left:834.5px;top:336.04px;font-size:12px;line-height:14px;transform:scaleX(0.875);transform-origin:0 50%;">Dd:</span>
<div class="sunk" style="left:866px;top:336.4px;width:48.5px;height:12.6px;border-color:#8f8f8f #fff #fff #8f8f8f"></div>
<span class="t" style="left:890.3px;top:336.04px;font-size:12px;line-height:14px;transform:translateX(-50%) scaleX(0.875);transform-origin:50% 50%;">26,25</span>
<span class="t" style="left:918.4px;top:336.04px;font-size:12px;line-height:14px;transform:scaleX(0.875);transform-origin:0 50%;">cm</span>
<span class="t" style="left:834.5px;top:352.04px;font-size:12px;line-height:14px;transform:scaleX(0.875);transform-origin:0 50%;">Sd:</span>
<div class="sunk" style="left:866px;top:352.4px;width:48.5px;height:12.6px;border-color:#8f8f8f #fff #fff #8f8f8f"></div>
<span class="t" style="left:890.3px;top:352.04px;font-size:12px;line-height:14px;transform:translateX(-50%) scaleX(0.875);transform-origin:50% 50%;">541,4</span>
<span class="t" style="left:918.4px;top:352.04px;font-size:12px;line-height:14px;transform:scaleX(0.875);transform-origin:0 50%;">cm^2</span>
<div style="left:724.1px;top:317.5px;width:51.8px;height:16.6px;border:3px solid #df1212;"></div>
<div style="left:680px;top:376.4px;width:400px;height:2.6px;background:#46464b"></div>
<div class="frame" style="left:680px;top:379px;width:402px;height:381px;border-radius:6px 6px 0 0;"></div>
<div class="title" style="left:680px;top:379px;width:402px;height:25px;border-radius:6px 6px 0 0;"></div>
<div class="face" style="left:683px;top:404px;width:393.5px;height:354.2px;"></div>
<svg style="left:687px;top:384.9px" width="9" height="13" viewBox="0 0 9 13"><defs><pattern id="hk2" width="2" height="2" patternUnits="userSpaceOnUse"><rect width="2" height="2" fill="#111"/><rect width="1" height="1" fill="#f4f4f4"/><rect x="1" y="1" width="1" height="1" fill="#f4f4f4"/></pattern></defs><rect width="9" height="13" fill="#000"/><rect x="1" y="1.4" width="5" height="10.4" fill="url(#hk2)"/><path d="M1,1.8H8" stroke="#e9e9e9" stroke-width="0.8"/><path d="M6.4,1.5V8.6" stroke="#fff" stroke-width="0.9"/><path d="M6,8.6H8M4.2,10.7H8" stroke="#ededed" stroke-width="0.8"/></svg>
<span class="t" style="left:704.5px;top:385.92px;font-size:12.5px;line-height:14.5px;color:#8f98a6;transform:scaleX(0.9);transform-origin:0 50%;">[2]Vented : Beyma 12LX60V2</span>
<div class="cb" style="left:975.5px;top:383.2px;width:31px;height:17.4px;"></div>
<svg style="left:984.0px;top:386.9px" width="14" height="10" viewBox="0 0 14 10"><rect x="1.5" y="4.5" width="10" height="3.6" rx="1.2" fill="#fff" stroke="#4d5668" stroke-width="1.2"/></svg>
<div class="cb" style="left:1009.5px;top:383.2px;width:31px;height:17.4px;"></div>
<svg style="left:1018.0px;top:385.9px" width="14" height="12" viewBox="0 0 14 12"><rect x="2.2" y="1.8" width="9.6" height="7.8" rx="1.2" fill="#eef2f8" stroke="#4d5668" stroke-width="1.25"/><rect x="4.9" y="4.6" width="4.2" height="2.2" fill="#fff" stroke="#4d5668" stroke-width="0.9"/></svg>
<div class="cb" style="left:1043.5px;top:383.2px;width:31px;height:17.4px;"></div>
<svg style="left:1052.0px;top:385.9px" width="14" height="12" viewBox="0 0 14 12"><path d="M1.6,1.6 L5,1.6 L7,3.7 L9,1.6 L12.4,1.6 L8.9,5.6 L12.5,9.8 L9,9.8 L7,7.6 L5,9.8 L1.5,9.8 L5.1,5.6 Z" fill="#fff" stroke="#4d5668" stroke-width="1.2" stroke-linejoin="round"/></svg>
<div style="left:683px;top:425px;width:394px;height:189.5px;background:#f0f0f0;border:1px solid;border-color:#fff #767676 #767676 #fff;box-shadow:inset -1px -1px 0 #b5b5b5"></div>
<div class="tab" style="left:685px;top:407px;width:40px;height:18px;border-right-color:transparent;box-shadow:none;"></div>
<span class="t" style="left:690px;top:408.64px;font-size:12px;line-height:14px;transform:scaleX(0.875);transform-origin:0 50%;">Driver</span>
<div class="tab" style="left:769.5px;top:407px;width:40.5px;height:18px;"></div>
<span class="t" style="left:774.1px;top:408.64px;font-size:12px;line-height:14px;transform:scaleX(0.875);transform-origin:0 50%;">Vents</span>
<div class="tab" style="left:811px;top:407px;width:41px;height:18px;"></div>
<span class="t" style="left:816.3px;top:408.64px;font-size:12px;line-height:14px;transform:scaleX(0.875);transform-origin:0 50%;">Plot</span>
<div class="tab" style="left:853px;top:407px;width:41px;height:18px;"></div>
<span class="t" style="left:858.3px;top:408.64px;font-size:12px;line-height:14px;transform:scaleX(0.875);transform-origin:0 50%;">Signal</span>
<div class="tab" style="left:895px;top:407px;width:53px;height:18px;"></div>
<span class="t" style="left:900.3px;top:408.64px;font-size:12px;line-height:14px;transform:scaleX(0.875);transform-origin:0 50%;">EQ/Filter</span>
<div class="tab" style="left:949px;top:407px;width:44.5px;height:18px;"></div>
<span class="t" style="left:954.3px;top:408.64px;font-size:12px;line-height:14px;transform:scaleX(0.875);transform-origin:0 50%;">Project</span>
<div style="left:725px;top:404.5px;width:45px;height:22px;background:#f0f0f0;border:1px solid;border-color:#fff #6b6b6b transparent #fff;border-right-width:2px;border-bottom:0;border-radius:2px 2px 0 0"></div>
<span class="t" style="left:732.2px;top:406.74px;font-size:12px;line-height:14px;transform:scaleX(0.875);transform-origin:0 50%;">Box</span>
<div class="sunk" style="left:691px;top:432px;width:302px;height:16px;"></div>
<span class="t" style="left:692.1px;top:433.54px;font-size:12px;line-height:14px;transform:scaleX(0.93);transform-origin:0 50%;">Vented</span>
<div style="left:997px;top:432px;width:72px;height:18px;border:1px solid;border-color:#a0a0a0 #fff #fff #a0a0a0;background:#f0f0f0"></div>
<div style="left:998.5px;top:433.5px;width:69.5px;height:15.5px;border:1px solid #3c3c3c;background:#f0f0f0;box-shadow:inset 1px 1px 0 #fff,inset -1px -1px 0 #7a7a7a,inset -2px -2px 0 #b0b0b0"></div>
<span class="t" style="left:1033.3px;top:433.64px;font-size:12px;line-height:14px;transform:translateX(-50%) scaleX(0.875);transform-origin:50% 50%;">Box shape</span>
<div class="btn" style="left:691px;top:452.5px;width:106px;height:16.5px;"></div>
<span class="t" style="left:744px;top:453.64px;font-size:12px;line-height:14px;transform:translateX(-50%) scaleX(0.875);transform-origin:50% 50%;">Rear chamber</span>
<div class="btn" style="left:801px;top:452.5px;width:101px;height:16.5px;"></div>
<span class="t" style="left:851.5px;top:453.64px;font-size:12px;line-height:14px;transform:translateX(-50%) scaleX(0.875);transform-origin:50% 50%;">Front chamber</span>
<div style="left:691px;top:473px;width:106px;height:136px;border:1px solid;border-color:#9a9a9a #fff #fff #9a9a9a;"></div>
<span class="t" style="left:696px;top:477.84px;font-size:12px;line-height:14px;color:#00007c;transform:scaleX(0.875);transform-origin:0 50%;">Volume:</span>
<div class="sunkw" style="left:696px;top:493px;width:66px;height:18.5px;"></div>
<span class="t" style="left:699.5px;top:495.94px;font-size:12px;line-height:14px;transform:scaleX(0.875);transform-origin:0 50%;">38,01</span>
<span class="t" style="left:768px;top:500.54px;font-size:12px;line-height:14px;transform:scaleX(0.875);transform-origin:0 50%;">l</span>
<span class="t" style="left:696.3px;top:513.04px;font-size:12px;line-height:14px;color:#00007c;transform:scaleX(0.875);transform-origin:0 50%;">Tuning freq.</span>
<div class="sunkw" style="left:696px;top:528px;width:66px;height:18.5px;"></div>
<span class="t" style="left:699.5px;top:531.04px;font-size:12px;line-height:14px;transform:scaleX(0.875);transform-origin:0 50%;">49,53</span>
<span class="t" style="left:767.5px;top:536.04px;font-size:12px;line-height:14px;transform:scaleX(0.875);transform-origin:0 50%;">Hz</span>
<span class="t" style="left:714.8px;top:589.84px;font-size:12px;line-height:14px;transform:scaleX(0.875);transform-origin:0 50%;">Advanced-&gt;</span>
<svg style="left:905px;top:456px" width="74" height="97" viewBox="905 76 74 97"><rect x="906.6" y="77.6" width="69.6" height="93.4" fill="#fff" stroke="#000" stroke-width="2.2"/><path d="M975.6,77V171.5" stroke="#000" stroke-width="3"/><path d="M938.8,146.9H975M938.8,161.9H975" stroke="#000" stroke-width="1.7"/><rect x="956" y="97.6" width="7.6" height="31.6" rx="2.6" fill="#000"/><path d="M962.8,104.4 L970.5,94 L974.5,91.4 V135.2 L970.5,132.5 L962.8,122Z" fill="#000"/><path d="M969.2,102.4l2.2,-2M968.6,113.1h2.6M969.2,123.8l2.2,2" stroke="#e8e8e8" stroke-width="1.3"/></svg>
<div style="left:683px;top:616px;width:394px;height:13px;border-top:1px solid #8a8a8a;background:#f0f0f0"></div>
<div style="left:682.6px;top:617px;width:155.4px;height:11.5px;border:1px solid;border-color:#8f8f8f #fff #fff #8f8f8f;background:#f2f2f2"></div>
<span class="t" style="left:759.5px;top:616.83px;font-size:10px;line-height:12px;transform:translateX(-50%) scaleX(0.93);transform-origin:50% 50%;font-family:'Liberation Serif',serif;font-weight:bold;letter-spacing:0.3px;">Parameters</span>
<div style="left:838px;top:617px;width:238.5px;height:10.6px;background:#00ffff"></div>
<span class="t" style="left:694.6px;top:636.04px;font-size:12px;line-height:14px;transform:scaleX(0.875);transform-origin:0 50%;">Qts:</span>
<div class="sunk" style="left:726px;top:636.4000000000001px;width:48.5px;height:12.6px;border-color:#8f8f8f #fff #fff #8f8f8f"></div>
<span class="t" style="left:750.3px;top:636.04px;font-size:12px;line-height:14px;transform:translateX(-50%) scaleX(0.875);transform-origin:50% 50%;">0,390</span>
<span class="t" style="left:694.6px;top:652.04px;font-size:12px;line-height:14px;transform:scaleX(0.875);transform-origin:0 50%;">Vas:</span>
<div class="sunk" style="left:726px;top:652.4000000000001px;width:48.5px;height:12.6px;border-color:#8f8f8f #fff #fff #8f8f8f"></div>
<span class="t" style="left:750.3px;top:652.04px;font-size:12px;line-height:14px;transform:translateX(-50%) scaleX(0.875);transform-origin:50% 50%;">43,00</span>
<span class="t" style="left:778.6px;top:652.04px;font-size:12px;line-height:14px;transform:scaleX(0.875);transform-origin:0 50%;">l</span>
<span class="t" style="left:694.6px;top:668.04px;font-size:12px;line-height:14px;transform:scaleX(0.875);transform-origin:0 50%;">Fs:</span>
<div class="sunk" style="left:726px;top:668.4000000000001px;width:48.5px;height:12.6px;border-color:#8f8f8f #fff #fff #8f8f8f"></div>
<span class="t" style="left:750.3px;top:668.04px;font-size:12px;line-height:14px;transform:translateX(-50%) scaleX(0.875);transform-origin:50% 50%;">49,00</span>
<span class="t" style="left:778.6px;top:668.04px;font-size:12px;line-height:14px;transform:scaleX(0.875);transform-origin:0 50%;">Hz</span>
<span class="t" style="left:694.6px;top:684.04px;font-size:12px;line-height:14px;transform:scaleX(0.875);transform-origin:0 50%;">Re:</span>
<div class="sunk" style="left:726px;top:684.4000000000001px;width:48.5px;height:12.6px;border-color:#8f8f8f #fff #fff #8f8f8f"></div>
<span class="t" style="left:750.3px;top:684.04px;font-size:12px;line-height:14px;transform:translateX(-50%) scaleX(0.875);transform-origin:50% 50%;">5,100</span>
<span class="t" style="left:778.6px;top:684.04px;font-size:12px;line-height:14px;transform:scaleX(0.875);transform-origin:0 50%;">ohm</span>
<span class="t" style="left:694.6px;top:700.04px;font-size:12px;line-height:14px;transform:scaleX(0.875);transform-origin:0 50%;">Le:</span>
<div class="sunk" style="left:726px;top:700.4000000000001px;width:48.5px;height:12.6px;border-color:#8f8f8f #fff #fff #8f8f8f"></div>
<span class="t" style="left:750.3px;top:700.04px;font-size:12px;line-height:14px;transform:translateX(-50%) scaleX(0.875);transform-origin:50% 50%;">2,10</span>
<span class="t" style="left:778.6px;top:700.04px;font-size:12px;line-height:14px;transform:scaleX(0.875);transform-origin:0 50%;">mH</span>
<span class="t" style="left:694.6px;top:716.04px;font-size:12px;line-height:14px;transform:scaleX(0.875);transform-origin:0 50%;">Xmax:</span>
<div class="sunk" style="left:726px;top:716.4000000000001px;width:48.5px;height:12.6px;border-color:#8f8f8f #fff #fff #8f8f8f"></div>
<span class="t" style="left:750.3px;top:716.04px;font-size:12px;line-height:14px;transform:translateX(-50%) scaleX(0.875);transform-origin:50% 50%;">10,0</span>
<span class="t" style="left:778.6px;top:716.04px;font-size:12px;line-height:14px;transform:scaleX(0.875);transform-origin:0 50%;">mm</span>
<span class="t" style="left:694.6px;top:732.04px;font-size:12px;line-height:14px;transform:scaleX(0.875);transform-origin:0 50%;">Z:</span>
<div class="sunk" style="left:726px;top:732.4000000000001px;width:48.5px;height:12.6px;border-color:#8f8f8f #fff #fff #8f8f8f"></div>
<span class="t" style="left:750.3px;top:732.04px;font-size:12px;line-height:14px;transform:translateX(-50%) scaleX(0.875);transform-origin:50% 50%;">8,000</span>
<span class="t" style="left:778.6px;top:732.04px;font-size:12px;line-height:14px;transform:scaleX(0.875);transform-origin:0 50%;">ohm</span>
<span class="t" style="left:834.5px;top:636.04px;font-size:12px;line-height:14px;transform:scaleX(0.875);transform-origin:0 50%;">Qms:</span>
<div class="sunk" style="left:866px;top:636.4000000000001px;width:48.5px;height:12.6px;border-color:#8f8f8f #fff #fff #8f8f8f"></div>
<span class="t" style="left:890.3px;top:636.04px;font-size:12px;line-height:14px;transform:translateX(-50%) scaleX(0.875);transform-origin:50% 50%;">15,300</span>
<span class="t" style="left:834.5px;top:652.04px;font-size:12px;line-height:14px;transform:scaleX(0.875);transform-origin:0 50%;">Qes:</span>
<div class="sunk" style="left:866px;top:652.4000000000001px;width:48.5px;height:12.6px;border-color:#8f8f8f #fff #fff #8f8f8f"></div>
<span class="t" style="left:890.3px;top:652.04px;font-size:12px;line-height:14px;transform:translateX(-50%) scaleX(0.875);transform-origin:50% 50%;">0,400</span>
<span class="t" style="left:834.5px;top:668.04px;font-size:12px;line-height:14px;transform:scaleX(0.875);transform-origin:0 50%;">SPL:</span>
<div class="sunk" style="left:866px;top:668.4000000000001px;width:48.5px;height:12.6px;border-color:#8f8f8f #fff #fff #8f8f8f"></div>
<span class="t" style="left:890.3px;top:668.04px;font-size:12px;line-height:14px;transform:translateX(-50%) scaleX(0.875);transform-origin:50% 50%;">93,05</span>
<span class="t" style="left:918.4px;top:668.04px;font-size:12px;line-height:14px;transform:scaleX(0.875);transform-origin:0 50%;">dB</span>
<span class="t" style="left:834.5px;top:684.04px;font-size:12px;line-height:14px;transform:scaleX(0.875);transform-origin:0 50%;">Pe:</span>
<div class="sunk" style="left:866px;top:684.4000000000001px;width:48.5px;height:12.6px;border-color:#8f8f8f #fff #fff #8f8f8f"></div>
<span class="t" style="left:890.3px;top:684.04px;font-size:12px;line-height:14px;transform:translateX(-50%) scaleX(0.875);transform-origin:50% 50%;">0,0</span>
<span class="t" style="left:918.4px;top:684.04px;font-size:12px;line-height:14px;transform:scaleX(0.875);transform-origin:0 50%;">W</span>
<span class="t" style="left:834.5px;top:700.04px;font-size:12px;line-height:14px;transform:scaleX(0.875);transform-origin:0 50%;">BL:</span>
<div class="sunk" style="left:866px;top:700.4000000000001px;width:48.5px;height:12.6px;border-color:#8f8f8f #fff #fff #8f8f8f"></div>
<span class="t" style="left:890.3px;top:700.04px;font-size:12px;line-height:14px;transform:translateX(-50%) scaleX(0.875);transform-origin:50% 50%;">20,00982</span>
<span class="t" style="left:918.4px;top:700.04px;font-size:12px;line-height:14px;transform:scaleX(0.875);transform-origin:0 50%;">N/A</span>
<span class="t" style="left:834.5px;top:716.04px;font-size:12px;line-height:14px;transform:scaleX(0.875);transform-origin:0 50%;">Dd:</span>
<div class="sunk" style="left:866px;top:716.4000000000001px;width:48.5px;height:12.6px;border-color:#8f8f8f #fff #fff #8f8f8f"></div>
<span class="t" style="left:890.3px;top:716.04px;font-size:12px;line-height:14px;transform:translateX(-50%) scaleX(0.875);transform-origin:50% 50%;">26,25</span>
<span class="t" style="left:918.4px;top:716.04px;font-size:12px;line-height:14px;transform:scaleX(0.875);transform-origin:0 50%;">cm</span>
<span class="t" style="left:834.5px;top:732.04px;font-size:12px;line-height:14px;transform:scaleX(0.875);transform-origin:0 50%;">Sd:</span>
<div class="sunk" style="left:866px;top:732.4000000000001px;width:48.5px;height:12.6px;border-color:#8f8f8f #fff #fff #8f8f8f"></div>
<span class="t" style="left:890.3px;top:732.04px;font-size:12px;line-height:14px;transform:translateX(-50%) scaleX(0.875);transform-origin:50% 50%;">541,4</span>
<span class="t" style="left:918.4px;top:732.04px;font-size:12px;line-height:14px;transform:scaleX(0.875);transform-origin:0 50%;">cm^2</span>
<div style="left:724.1px;top:697.5px;width:51.8px;height:16.6px;border:3px solid #df1212;"></div>
</body></html>
